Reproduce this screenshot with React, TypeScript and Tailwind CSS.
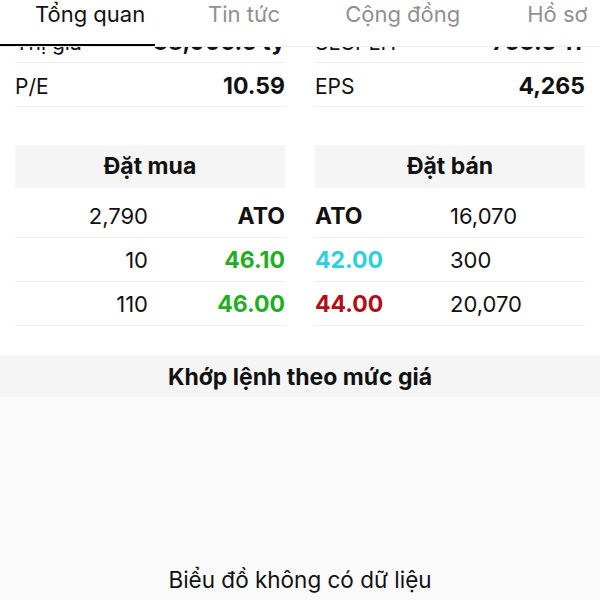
const stats = [
  { l: "Thị giá", v: "38,906.5 tỷ", rl: "SLCPLH", rv: "753.5 Tr" },
  { l: "P/E", v: "10.59", rl: "EPS", rv: "4,265" },
];

const buys = [
  { q: "2,790", p: "ATO", c: "text-[#111]" },
  { q: "10", p: "46.10", c: "text-[#1fae1f]" },
  { q: "110", p: "46.00", c: "text-[#1fae1f]" },
];

const sells = [
  { p: "ATO", q: "16,070", c: "text-[#111]" },
  { p: "42.00", q: "300", c: "text-[#2dd0da]" },
  { p: "44.00", q: "20,070", c: "text-[#b10f16]" },
];

const Tabs = () => (
  <div className="relative z-10 h-[47px] bg-white border-b border-[#ececec] flex items-start whitespace-nowrap overflow-hidden text-[22px] leading-[28px]">
    <div className="h-[46px] w-[155px] pl-[35px] border-b-2 border-black text-[#111]">Tổng quan</div>
    <div className="ml-[53px] text-[#909090]">Tin tức</div>
    <div className="ml-[65px] text-[#909090]">Cộng đồng</div>
    <div className="ml-[67px] text-[#909090]">Hồ sơ</div>
  </div>
);

export default function App() {
  return (
    <div className="w-[600px] h-[600px] overflow-hidden bg-white text-[#111] font-['Inter',sans-serif]">
      <Tabs />
      <div className="-mt-[28px] px-[15px] grid grid-cols-2 gap-x-[30px] text-[22px]">
        {stats.map((s) => [
          <div key={s.l} className="h-[44px] pt-[4px] flex items-center justify-between border-b border-[#ececec]">
            <span className="text-[21px]">{s.l}</span>
            <span className="font-bold text-[23px]">{s.v}</span>
          </div>,
          <div key={s.rl} className="h-[44px] pt-[4px] flex items-center justify-between border-b border-[#ececec]">
            <span className="text-[21px]">{s.rl}</span>
            <span className="font-bold text-[23px]">{s.rv}</span>
          </div>,
        ])}
      </div>

      <div className="mt-[38px] px-[15px] grid grid-cols-2 gap-x-[30px] text-[22px]">
        <div>
          <div className="h-[43px] bg-[#f5f5f5] flex items-center justify-center font-bold text-[23px]">Đặt mua</div>
          <div className="mt-[6px]">
            {buys.map((b) => (
              <div key={b.p} className="h-[44px] pt-[2px] grid grid-cols-2 items-center border-b border-[#ececec]">
                <span className="text-right pr-[2px]">{b.q}</span>
                <span className={`text-right font-bold text-[23px] ${b.c}`}>{b.p}</span>
              </div>
            ))}
          </div>
        </div>
        <div>
          <div className="h-[43px] bg-[#f5f5f5] flex items-center justify-center font-bold text-[23px]">Đặt bán</div>
          <div className="mt-[6px]">
            {sells.map((s) => (
              <div key={s.p} className="h-[44px] pt-[2px] grid grid-cols-2 items-center border-b border-[#ececec]">
                <span className={`font-bold text-[23px] ${s.c}`}>{s.p}</span>
                <span>{s.q}</span>
              </div>
            ))}
          </div>
        </div>
      </div>

      <div className="mt-[29px]">
        <div className="h-[42px] pt-[3px] bg-[#f5f5f5] flex items-center justify-center font-bold text-[23px]">Khớp lệnh theo mức giá</div>
        <div className="h-[260px] bg-[#fafafa] pt-[166px] text-center text-[22.5px]">Biểu đồ không có dữ liệu</div>
      </div>
    </div>
  );
}
